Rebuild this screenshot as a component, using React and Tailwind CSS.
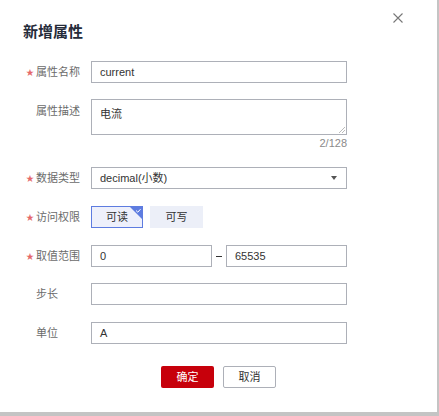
import React from 'react';

const font = { fontFamily: '"Liberation Sans", "Noto Sans CJK SC", sans-serif' };

function Label({ required, children }) {
  return (
    <div className="flex w-[68px] shrink-0 items-center pl-[3px] text-[11px] text-[#6b6b6b]">
      <span className="w-[10px] text-[8px] leading-[11px] text-[#e5696b]">{required ? '★' : ''}</span>
      <span>{children}</span>
    </div>
  );
}

function Input({ value, className = '' }) {
  return (
    <div className={`flex h-[22px] items-center border border-[#adb0b8] bg-white pl-[8px] text-[11px] text-[#333] ${className}`}>
      {value}
    </div>
  );
}

export default function App() {
  return (
    <div className="h-[416px] w-[439px] bg-[#c4c4c4]" style={font}>
      <div className="relative h-[412px] w-[437px] bg-white pl-[23px]">
        <button className="absolute left-[393px] top-[13px] text-[#777]">
          <svg width="10" height="10" viewBox="0 0 10 10" fill="none" stroke="currentColor" strokeWidth="1.1">
            <path d="M0.5 0.5L9.5 9.5M9.5 0.5L0.5 9.5" />
          </svg>
        </button>
        <h1 className="pt-[22px] text-[15px] font-bold leading-[20px] text-[#252b3a]">新增属性</h1>

        <div className="mt-[19px] flex items-center">
          <Label required>属性名称</Label>
          <Input value="current" className="w-[256px]" />
        </div>

        <div className="mt-[16px] flex items-start">
          <div className="pt-[4px]">
            <Label>属性描述</Label>
          </div>
          <div className="w-[256px]">
            <div className="relative h-[36px] border border-[#adb0b8] pl-[8px] pt-[6px] text-[11px] text-[#333]">
              电流
              <svg className="absolute bottom-[1px] right-[1px]" width="6" height="6" viewBox="0 0 6 6" stroke="#aaa" strokeWidth="0.8">
                <path d="M0 6L6 0M3 6L6 3" />
              </svg>
            </div>
            <div className="mt-[2px] text-right text-[11px] leading-[12px] text-[#8a8a8a]">2/128</div>
          </div>
        </div>

        <div className="mt-[18px] flex items-center">
          <Label required>数据类型</Label>
          <div className="flex h-[22px] w-[256px] items-center justify-between border border-[#adb0b8] pl-[8px] pr-[9px] text-[11px] text-[#333]">
            <span>decimal(小数)</span>
            <svg width="6" height="4" viewBox="0 0 6 4" fill="#555">
              <path d="M0 0H6L3 4Z" />
            </svg>
          </div>
        </div>

        <div className="mt-[17px] flex items-center">
          <Label required>访问权限</Label>
          <div className="flex gap-[7px]">
            <div className="relative flex h-[22px] w-[52px] items-center justify-center overflow-hidden border border-[#5e7ce0] bg-[#eef0fb] text-[11px] text-[#333]">
              可读
              <svg className="absolute right-0 top-0" width="12" height="12" viewBox="0 0 12 12">
                <path d="M0 0H12V12Z" fill="#5e7ce0" />
                <path d="M6 3.5L7.8 5.2L10.5 2.2" fill="none" stroke="#fff" strokeWidth="1" />
              </svg>
            </div>
            <div className="flex h-[22px] w-[53px] items-center justify-center bg-[#eceff8] text-[11px] text-[#333]">可写</div>
          </div>
        </div>

        <div className="mt-[17px] flex items-center">
          <Label required>取值范围</Label>
          <Input value="0" className="w-[121px]" />
          <div className="mx-[4px] h-[1px] w-[6px] bg-[#333]" />
          <Input value="65535" className="w-[121px]" />
        </div>

        <div className="mt-[16px] flex items-center">
          <Label>步长</Label>
          <Input value="" className="w-[256px]" />
        </div>

        <div className="mt-[17px] flex items-center">
          <Label>单位</Label>
          <Input value="A" className="w-[256px]" />
        </div>

        <div className="mt-[22px] flex gap-[9px] pl-[138px]">
          <button className="h-[22px] w-[53px] rounded-[2px] bg-[#c7000b] text-[11px] text-white">确定</button>
          <button className="h-[22px] w-[53px] rounded-[2px] border border-[#adb0b8] bg-white text-[11px] text-[#333]">取消</button>
        </div>
      </div>
    </div>
  );
}
